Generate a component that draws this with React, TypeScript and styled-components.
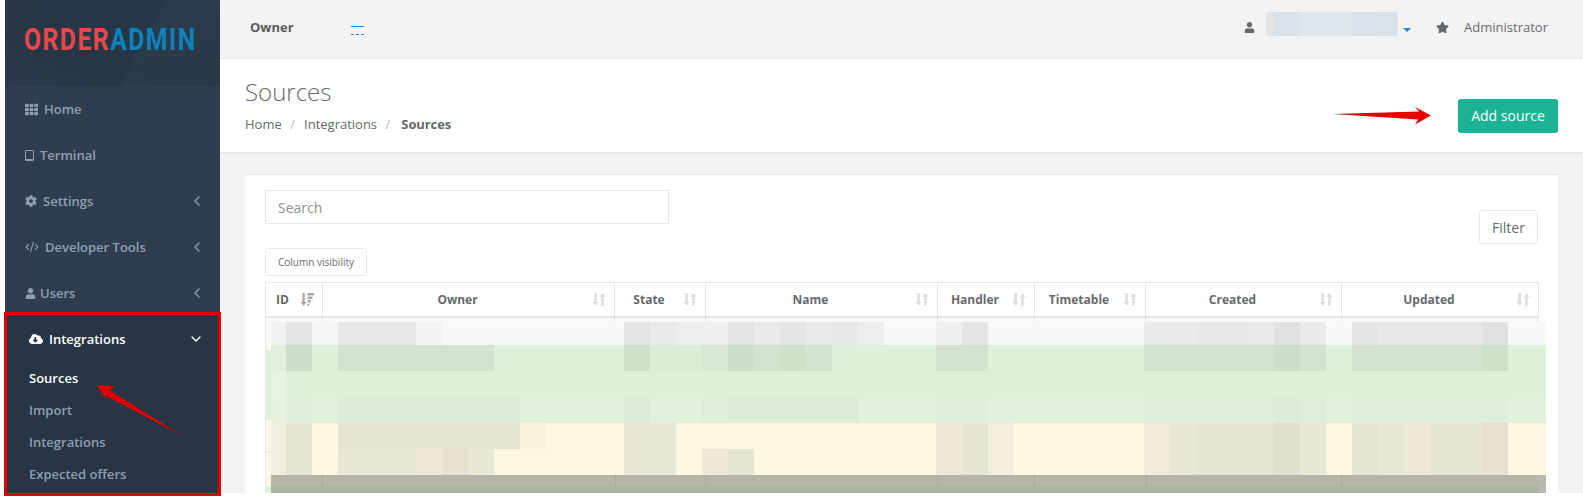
import React from "react";
import styled, { createGlobalStyle } from "styled-components";
import { FaTh, FaCog, FaUser, FaCloudDownloadAlt, FaStar } from "react-icons/fa";
import { ChevronLeft, ChevronDown, CodeXml } from "lucide-react";

const Global = createGlobalStyle`
  html, body { margin: 0; padding: 0; background: #fff; overflow: hidden; }
  * { box-sizing: border-box; }
  body { font-family: "Open Sans", "Liberation Sans", sans-serif; font-size: 13px; color: #676a6c; }
`;

const Page = styled.div`
  position: relative;
  display: flex;
  align-items: flex-start;
  width: 1583px;
  height: 501px;
  padding-left: 5px;
  overflow: hidden;
`;

const Sidebar = styled.aside`
  flex: 0 0 215px;
  min-width: 0;
  height: 496px;
  background: #2f3e4e;
`;

const LogoBar = styled.div`
  height: 86px;
  padding: 22px 0 0 19px;
  overflow: hidden;
  background:
    linear-gradient(118deg, transparent 62%, rgba(255, 255, 255, 0.02) 62%, rgba(255, 255, 255, 0.01) 100%),
    linear-gradient(200deg, #27384a 0%, #263645 60%, #2a3a4a 100%);
`;

const Logo = styled.div`
  font-family: "Roboto", "Liberation Sans", sans-serif;
  font-weight: 700;
  font-size: 31px;
  line-height: 36px;
  letter-spacing: 1.8px;
  white-space: nowrap;
  transform: scaleX(0.8);
  transform-origin: left center;
`;

const LogoPart = styled.span<{ $c: string }>`
  color: ${(p) => p.$c};
`;

const MenuItem = styled.div<{ $gap: number }>`
  display: flex;
  align-items: center;
  height: 46px;
  padding: 0 15px 0 20px;
  gap: ${(p) => p.$gap}px;
  color: #8f9fb3;
  font-weight: 600;
  font-size: 13px;
`;

const Chevron = styled.span`
  margin-left: auto;
  display: flex;
`;

const Group = styled.div`
  position: relative;
  width: 217px;
  height: 184px;
  margin: -4px 0 0 -1px;
  padding: 1px 0 0;
  border: 3px solid #e20000;
  background: #283544;
`;

const ActiveItem = styled.div`
  display: flex;
  align-items: center;
  gap: 6px;
  height: 46px;
  padding: 0 14px 0 22px;
  color: #fff;
  font-weight: 600;
  font-size: 13px;
`;

const SubItem = styled.div<{ $active?: boolean }>`
  display: flex;
  align-items: center;
  height: 32px;
  padding-left: 22px;
  color: ${(p) => (p.$active ? "#fff" : "#8f9fb3")};
  font-weight: 600;
  font-size: 13px;
`;

const Main = styled.main`
  flex: 1;
  min-width: 0;
  height: 493px;
  display: flex;
  flex-direction: column;
  background: #f3f3f3;
  overflow: hidden;
`;

const TopBar = styled.header`
  display: flex;
  align-items: center;
  flex: 0 0 59px;
  padding: 0 35px 5px 30px;
  border-bottom: 1px solid #e7e7e7;
`;

const OwnerLabel = styled.span`
  font-weight: 700;
  color: #585c60;
  width: 101px;
`;

const OwnerLink = styled.span`
  display: block;
  width: 13px;
  height: 9px;
  margin-top: 7px;
  border-top: 1px solid #2a86c8;
  border-bottom: 1px dashed #2a86c8;
`;

const TopRight = styled.div`
  margin-left: auto;
  display: flex;
  align-items: center;
  color: #676a6c;
`;

const UserIcon = styled.span`
  display: flex;
  font-size: 11px;
  color: #676a6c;
  margin: 2px 11px 0 0;
`;

const Blurred = styled.div`
  width: 132px;
  height: 24px;
  margin-top: -6px;
  background: linear-gradient(90deg, #e2e4e6 0 8px, #d9e1ea 8px 34px, #dfe5ec 34px 86px, #d9e1ea 86px 112px, #dce2e9 112px);
`;

const Caret = styled.span`
  width: 0;
  height: 0;
  margin: 6px 25px 0 5px;
  border-left: 4px solid transparent;
  border-right: 4px solid transparent;
  border-top: 4px solid #3a7cbf;
`;

const StarIcon = styled.span`
  display: flex;
  font-size: 13px;
  color: #676a6c;
  margin: 2px 15px 0 0;
`;

const TitleBand = styled.section`
  position: relative;
  flex: 0 0 95px;
  display: flex;
  align-items: center;
  justify-content: space-between;
  padding: 0 25px;
  background: #fff;
  border-bottom: 2px solid #e7e7e7;
`;

const TitleBlock = styled.div`
  margin-top: -2px;
`;

const Title = styled.h1`
  margin: -1px 0 0;
  font-size: 24px;
  line-height: 33px;
  font-weight: 300;
  color: #676a6c;
`;

const Crumbs = styled.div`
  display: flex;
  margin-top: 7px;
  line-height: 18px;
  color: #676a6c;
`;

const Sep = styled.span`
  color: #b9babb;
  margin: 0 9px 0 8.5px;
`;

const CurrentCrumb = styled.strong`
  font-weight: 700;
  margin-left: 2px;
  letter-spacing: -0.1px;
`;

const AddButton = styled.button`
  width: 100px;
  height: 34px;
  margin-top: 20px;
  border: 0;
  border-radius: 3px;
  background: #1ab394;
  color: #fff;
  font: 400 14px "Open Sans", sans-serif;
`;

const Card = styled.section`
  position: relative;
  width: 1313px;
  margin: 20px 0 0 25px;
  flex: 1;
  background: #fff;
  border-top: 1px solid #e7eaec;
  padding: 15px 20px 0 20px;
`;

const SearchRow = styled.div`
  display: flex;
  justify-content: space-between;
`;

const SearchBox = styled.div`
  width: 404px;
  height: 34px;
  padding-left: 12px;
  display: flex;
  align-items: center;
  border: 1px solid #e5e6e7;
  border-radius: 1px;
  font-size: 14px;
  color: #8e9296;
`;

const FilterButton = styled.div`
  width: 59px;
  height: 34px;
  margin-top: 20px;
  display: flex;
  align-items: center;
  justify-content: center;
  border: 1px solid #e7eaec;
  border-radius: 3px;
  font-size: 14px;
  color: #676a6c;
`;

const ColumnButton = styled.div`
  width: 102px;
  height: 28px;
  margin-top: 4px;
  display: flex;
  align-items: center;
  justify-content: center;
  border: 1px solid #e7eaec;
  border-radius: 3px;
  font-size: 10px;
  color: #676a6c;
`;

const TableClip = styled.div`
  height: 211px;
  margin: 6px -1px 0 0;
  overflow: hidden;
`;

const Table = styled.table`
  width: 1273px;
  table-layout: fixed;
  border-collapse: collapse;
`;

const Th = styled.th<{ $left?: boolean }>`
  position: relative;
  height: 34px;
  padding: 0 32px 0 10px;
  border: 1px solid #e7e7e7;
  border-bottom: 2px solid #e7e7e7;
  font-size: 12px;
  font-weight: 700;
  color: #676a6c;
  text-align: ${(p) => (p.$left ? "left" : "center")};
`;

const SortMark = styled.svg`
  position: absolute;
  right: 8px;
  top: 10px;
  width: 14px;
  height: 13px;
`;

const Tr = styled.tr<{ $bg: string; $h: number }>`
  height: ${(p) => p.$h}px;
  background: ${(p) => p.$bg};
`;

const Td = styled.td`
  border: 1px solid #e7e7e7;
`;

const Mosaic = styled.svg`
  position: absolute;
  left: 26px;
  top: 147px;
  width: 1275px;
  height: 171px;
`;

const Arrow = styled.svg`
  position: absolute;
  left: 0;
  top: 0;
  width: 1583px;
  height: 501px;
  pointer-events: none;
`;

const SmallTablet = () => (
  <svg width="9" height="11" viewBox="0 0 9 11" aria-hidden="true">
    <path d="M1 .5h7a.5.5 0 0 1 .5.5v9a.5.5 0 0 1-.5.5H1a.5.5 0 0 1-.5-.5V1A.5.5 0 0 1 1 .5z" fill="none" stroke="#8f9fb3" />
    <rect x="1" y="9" width="7" height="1.4" fill="#8f9fb3" />
  </svg>
);

const SortBoth = () => (
  <SortMark viewBox="0 0 14 13" aria-hidden="true">
    <path d="M2.400 0h2.400v9h1.900l-3.100 4L.5 9h1.900zM9.200 13h2.400V4h1.900L10.400 0 7.300 4h1.900z" fill="#dddddd" />
  </SortMark>
);

const SortActive = () => (
  <SortMark viewBox="0 0 14 13" aria-hidden="true">
    <path d="M2.400 0h2.400v9h1.900l-3.100 4L.5 9h1.900z" fill="#a8a8a8" />
    <path d="M7.500 0h6.500v2.400H7.500zM7.500 3.500h5v2.400h-5zM7.500 7h3.300v2.400H7.500zM7.500 10.500h1.700v2.400H7.500z" fill="#a8a8a8" />
  </SortMark>
);

const columns = [
  ["ID", 57], ["Owner", 292], ["State", 91], ["Name", 232],
  ["Handler", 97], ["Timetable", 111], ["Created", 196], ["Updated", 197],
] as const;

const rows = [
  { bg: "#f9f9f9", h: 34 },
  { bg: "#dff0d8", h: 35 },
  { bg: "#dff0d8", h: 34 },
  { bg: "#fcf8e3", h: 33 },
  { bg: "#fcf8e3", h: 34 },
  { bg: "#dff0d8", h: 34 },
];

// Pixelated redaction: one string per band, one digit of darkness per block.
const bands = [
  { y: 0, h: 23, base: "#f8f8f8", cells: "37166620000000" + "754375" + "7564" + "00" + "37" + "000000" + "556658" + "50" + "76666" + "800" },
  { y: 23, h: 26, base: "#dff0d8", cells: "27055555500000" + "61137" + "564" + "0000" + "55" + "000000" + "4555575" + "0" + "555556" + "00" },
  { y: 49, h: 26, base: "#dff0d8", cells: "0".repeat(50) },
  { y: 75, h: 26, base: "#e3f0db", cells: "11022222220000" + "20012" + "2222" + "000" + "11000000" + "11111210" + "111111" + "00" },
  { y: 101, h: 26, base: "#fcf7e3", cells: "47077777772000" + "66" + "0000000000" + "573" + "00000" + "4677796" + "0" + "765778" + "00" },
  { y: 127, h: 26, base: "#fcf7e3", cells: "47066658600000" + "66" + "0" + "57" + "0000000" + "573" + "00000" + "4677796" + "0" + "765778" + "00" },
];

const cellX = (i: number) => (i === 0 ? 0 : 15 + 26 * (i - 1));
const cellW = (i: number) => (i === 0 ? 15 : i === 49 ? 12 : 26);
const columnLines = [51, 344, 434, 666, 763, 875, 1070];

const RedactionMosaic = () => (
  <Mosaic viewBox="0 0 1275 171" shapeRendering="crispEdges" aria-hidden="true">
    {bands.map((b) => (
      <g key={b.y}>
        <rect x="0" y={b.y} width="1275" height={b.h} fill={b.base} />
        <rect x="0" y={b.y} width="15" height={b.h} fill="#fff" fillOpacity="0.25" />
        {Array.from({ length: 50 }, (_, i) => {
          const d = Number(b.cells[i] ?? 0);
          return d ? (
            <rect key={i} x={cellX(i)} y={b.y} width={cellW(i)} height={b.h} fill="#1a2228" fillOpacity={d * 0.0125} />
          ) : null;
        })}
      </g>
    ))}
    <rect x="0" y="153" width="1275" height="11" fill="#b6b5a7" />
    <rect x="0" y="164" width="1275" height="7" fill="#aab4a3" />
    <rect x="1267" y="153" width="8" height="18" fill="#b8b8b0" />
    {columnLines.map((x) => <rect key={x} x={x} y="153" width="1" height="11" fill="#a9a89c" />)}
  </Mosaic>
);

export default function App() {
  return (
    <>
      <Global />
      <Page>
        <Sidebar>
          <LogoBar>
            <Logo>
              <LogoPart $c="#e8474c">ORDER</LogoPart>
              <LogoPart $c="#0d82bd">ADMIN</LogoPart>
            </Logo>
          </LogoBar>
          <MenuItem $gap={6}><FaTh size={13} />Home</MenuItem>
          <MenuItem $gap={6}><SmallTablet />Terminal</MenuItem>
          <MenuItem $gap={6}><FaCog size={12} />Settings<Chevron><ChevronLeft size={16} /></Chevron></MenuItem>
          <MenuItem $gap={6}><CodeXml size={14} />Developer Tools<Chevron><ChevronLeft size={16} /></Chevron></MenuItem>
          <MenuItem $gap={4}><FaUser size={11} />Users<Chevron><ChevronLeft size={16} /></Chevron></MenuItem>
          <Group>
            <ActiveItem><FaCloudDownloadAlt size={14} />Integrations<Chevron><ChevronDown size={16} /></Chevron></ActiveItem>
            <SubItem $active>Sources</SubItem>
            <SubItem>Import</SubItem>
            <SubItem>Integrations</SubItem>
            <SubItem>Expected offers</SubItem>
          </Group>
        </Sidebar>
        <Main>
          <TopBar>
            <OwnerLabel>Owner</OwnerLabel>
            <OwnerLink />
            <TopRight>
              <UserIcon><FaUser /></UserIcon>
              <Blurred />
              <Caret />
              <StarIcon><FaStar /></StarIcon>
              Administrator
            </TopRight>
          </TopBar>
          <TitleBand>
            <TitleBlock>
              <Title>Sources</Title>
              <Crumbs>
                Home<Sep>/</Sep>Integrations<Sep>/</Sep><CurrentCrumb>Sources</CurrentCrumb>
              </Crumbs>
            </TitleBlock>
            <AddButton>Add source</AddButton>
          </TitleBand>
          <Card>
            <SearchRow>
              <SearchBox>Search</SearchBox>
              <FilterButton>Filter</FilterButton>
            </SearchRow>
            <ColumnButton>Column visibility</ColumnButton>
            <TableClip>
              <Table>
                <colgroup>
                  {columns.map(([name, w]) => <col key={name} width={w} />)}
                </colgroup>
                <thead>
                  <tr>
                    {columns.map(([name], i) => (
                      <Th key={name} $left={i === 0}>
                        {name}
                        {i === 0 ? <SortActive /> : <SortBoth />}
                      </Th>
                    ))}
                  </tr>
                </thead>
                <tbody>
                  {rows.map((r, i) => (
                    <Tr key={i} $bg={r.bg} $h={r.h}>
                      {columns.map(([name]) => <Td key={name} />)}
                    </Tr>
                  ))}
                </tbody>
              </Table>
            </TableClip>
            <RedactionMosaic />
          </Card>
        </Main>
        <Arrow viewBox="0 0 1583 501" aria-hidden="true">
          <defs>
            <linearGradient id="arrowA" x1="0" y1="0" x2="1" y2="0">
              <stop offset="0" stopColor="#8a3a3a" />
              <stop offset="0.35" stopColor="#e20000" />
              <stop offset="1" stopColor="#e80000" />
            </linearGradient>
          </defs>
          <path d="M1332 114 L1419 111.500 L1415 107 L1431 115.500 L1415 124.500 L1418 119.500 Z" fill="url(#arrowA)" />
          <path d="M97 385 L115 386 L110 390.500 L181 435 L105 395.500 L106 400 Z" fill="#dd0000" />
        </Arrow>
      </Page>
    </>
  );
}
